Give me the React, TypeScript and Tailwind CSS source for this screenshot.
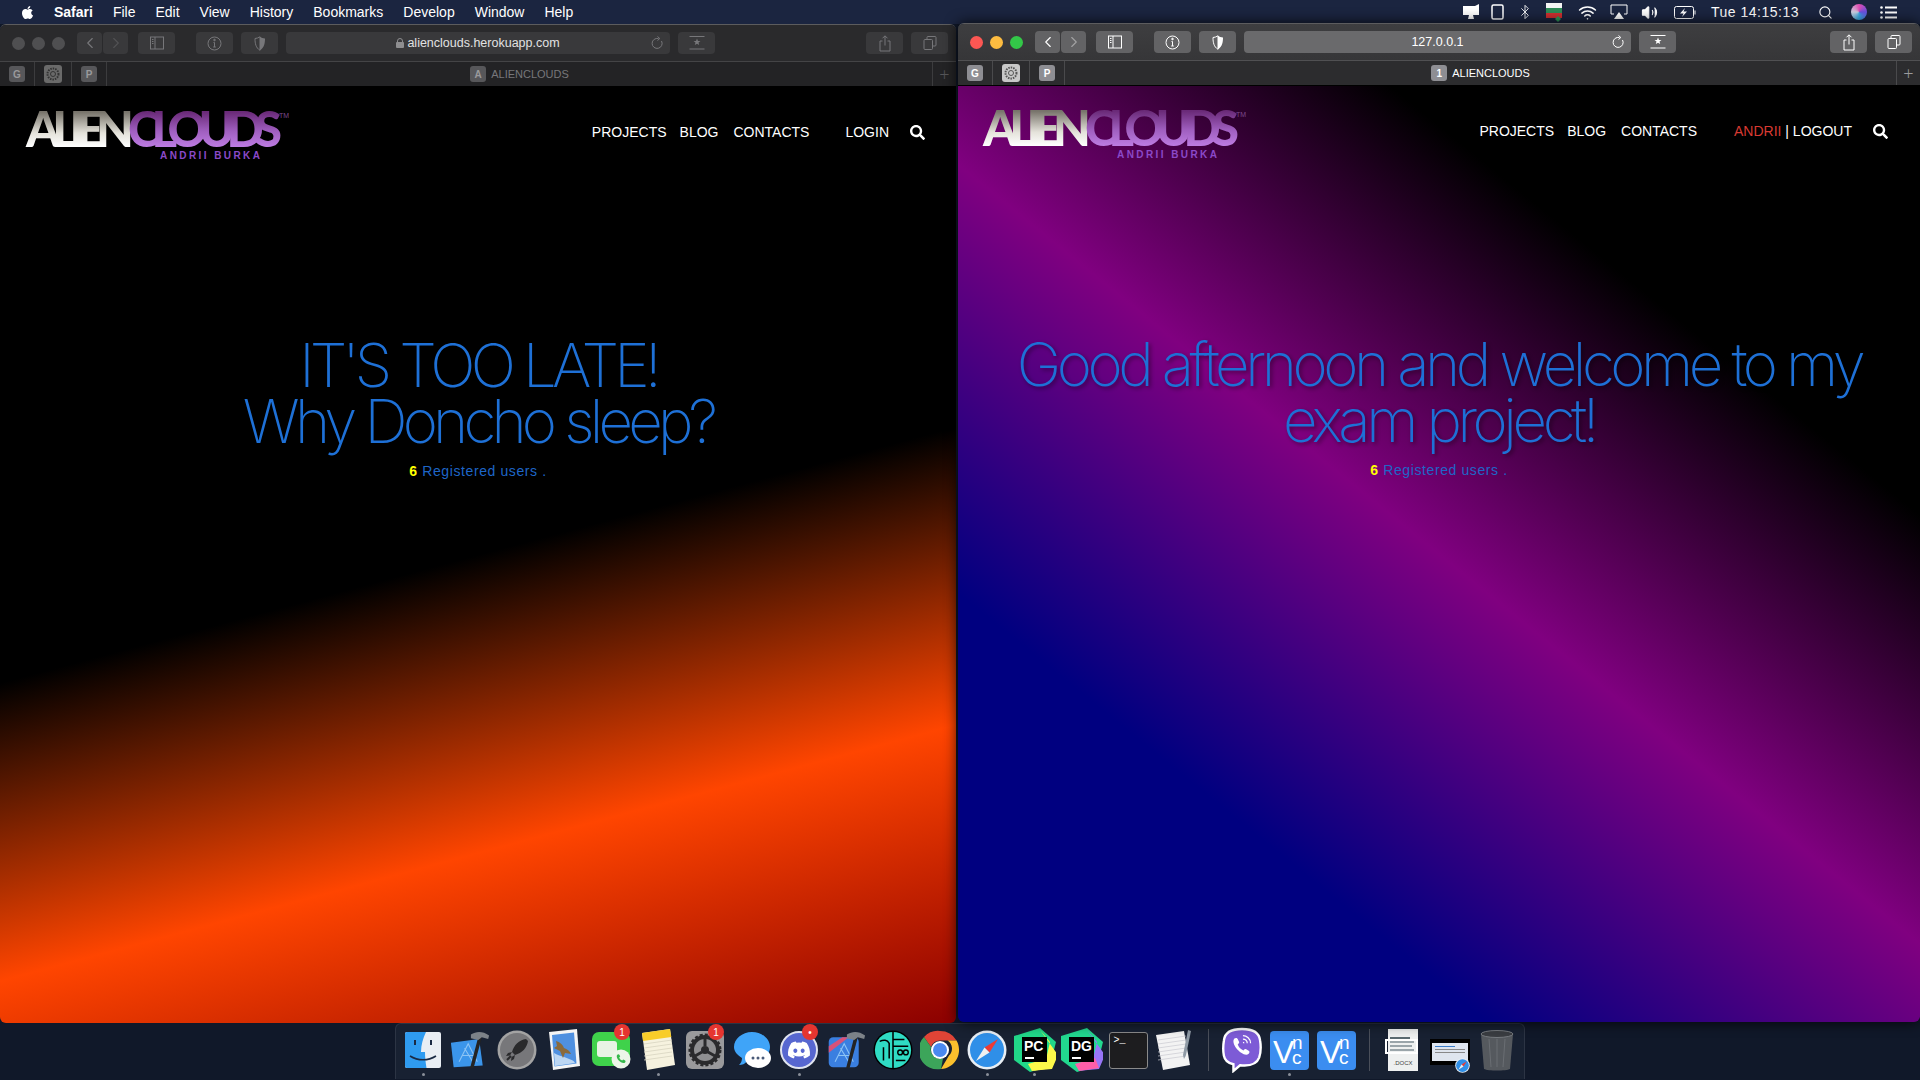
import type { ReactNode } from "react";
import { Bluetooth, ChevronLeft, ChevronRight, Search, Volume2, Wifi } from "lucide-react";
import { FaApple, FaDiscord, FaSearch } from "react-icons/fa";

const sans = "font-['Liberation_Sans',Arial,sans-serif]";

function Logo({ id }: { id: string }) {
  return (
    <svg width="265" height="54" viewBox="0 0 265 54" className="shrink-0 overflow-visible">
      <defs>
        <linearGradient id={`${id}-a`} gradientUnits="userSpaceOnUse" x1="0" y1="7" x2="0" y2="42">
          <stop offset="0" stopColor="#77736a" />
          <stop offset="0.6" stopColor="#e4e2da" />
          <stop offset="1" stopColor="#ffffff" />
        </linearGradient>
        <linearGradient id={`${id}-b`} gradientUnits="userSpaceOnUse" x1="0" y1="7" x2="0" y2="42">
          <stop offset="0" stopColor="#6a2a78" />
          <stop offset="0.55" stopColor="#a05fc0" />
          <stop offset="1" stopColor="#bd7ce2" />
        </linearGradient>
      </defs>
      <g fontFamily="Lato, sans-serif" fontWeight="900" fontSize="49">
        <text x="0" y="42" textLength="108" lengthAdjust="spacing" fill={`url(#${id}-a)`}>ALIEN</text>
        <text x="102" y="42" textLength="154" lengthAdjust="spacing" fill={`url(#${id}-b)`}>CLOUDS</text>
      </g>
      <text x="253" y="13" fontFamily="Liberation Sans" fontSize="7" fill="#7b4a8c">TM</text>
      <text x="134" y="54" textLength="100" fontFamily="Liberation Sans" fontWeight="700" fontSize="10" fill="#8b49c9">ANDRII BURKA</text>
    </svg>
  );
}

function Nav({ className = "", children }: { className?: string; children: ReactNode }) {
  return <span className={`${sans} block text-[14px] leading-[16px] text-white whitespace-nowrap ${className}`}>{children}</span>;
}

function TrafficLights({ active }: { active: boolean }) {
  const colors = active ? ["bg-[#fc5753]", "bg-[#fdbc40]", "bg-[#33c748]"] : ["bg-[#4f4f51]", "bg-[#4f4f51]", "bg-[#4f4f51]"];
  return (
    <div className="flex gap-[7px]">
      {colors.map((c, i) => (
        <span key={i} className={`w-[13px] h-[13px] rounded-full ${c}`} />
      ))}
    </div>
  );
}

function ToolButton({ active, w = "w-[37px]", className = "", children }: { active: boolean; w?: string; className?: string; children?: ReactNode }) {
  return (
    <div className={`h-[22px] ${w} rounded-[4px] flex items-center justify-center shrink-0 ${active ? "bg-[#636365] text-white" : "bg-[#39393b] text-[#77777a]"} ${className}`}>
      {children}
    </div>
  );
}

function Toolbar({ active, url }: { active: boolean; url: string }) {
  return (
    <div className={`h-[37px] flex items-center pl-[12px] pr-[8px] border-b ${active ? "bg-[linear-gradient(180deg,#3e3e40,#363638)] border-[#505052]" : "bg-[#2a2a2c] border-[#444446]"}`}>
      <TrafficLights active={active} />
      <div className="flex gap-[1px] ml-[12px]">
        <ToolButton active={active} w="w-[25px]"><ChevronLeft size={18} strokeWidth={1.5} /></ToolButton>
        <ToolButton active={active} w="w-[25px]"><ChevronRight size={18} strokeWidth={1.5} className="opacity-40" /></ToolButton>
      </div>
      <ToolButton active={active} className="ml-[10px]">
        <svg width="16" height="14" viewBox="0 0 16 14" fill="none" stroke="currentColor"><rect x="1.5" y="1" width="13" height="12" /><path d="M6 1v12M3 3.5h1.5M3 5.5h1.5M3 7.5h1.5" /></svg>
      </ToolButton>
      <ToolButton active={active} className="ml-[21px]">
        <svg width="15" height="15" viewBox="0 0 15 15" fill="none" stroke="currentColor"><circle cx="7.5" cy="7.5" r="6.5" /><path d="M7.5 6.5v4.5M6.2 11h2.6M6.5 6.5h1" /><circle cx="7.5" cy="4" r=".8" fill="currentColor" /></svg>
      </ToolButton>
      <ToolButton active={active} className="ml-[8px]">
        <svg width="12" height="15" viewBox="0 0 12 15"><path d="M6 .8C4.5 1.8 2.8 2.4 1 2.5c0 5 .8 9.300 5 11.800V.8z" fill="none" stroke="currentColor" /><path d="M6 .8c1.500 1 3.200 1.600 5 1.700 0 5-.8 9.300-5 11.800V.8z" fill="currentColor" /></svg>
      </ToolButton>
      <div className={`ml-[8px] h-[22px] ${active ? "w-[387px] bg-[#6a6a6c]" : "w-[384px] bg-[#39393b]"} rounded-[4px] relative flex items-center justify-center shrink-0`}>
        <span className={`${sans} text-[12.5px] flex items-center gap-[3px] ${active ? "text-white" : "text-[#e2e2e2]"}`}>
          {!active && (
            <svg width="8" height="10" viewBox="0 0 8 10" fill="#8e8e90"><rect y="4" width="8" height="6" rx="1" /><path d="M1.500 4.500V3a2.500 2.500 0 0 1 5 0v1.500" fill="none" stroke="#8e8e90" /></svg>
          )}
          {url}
        </span>
        <svg width="13" height="14" viewBox="0 0 13 14" fill="none" stroke={active ? "#fff" : "#77777a"} className="absolute right-[6px]"><path d="M10.500 5a5 5 0 1 1-3-2.400" /><path d="M6.500 .5l2.300 2-2.300 2" /></svg>
      </div>
      <ToolButton active={active} className="ml-[8px]">
        <svg width="16" height="14" viewBox="0 0 16 14" fill="currentColor"><path d="M8 2.500l1 2.500 2.500.1-2 1.500.7 2.500L8 7.700 5.800 9.100l.7-2.500-2-1.500L7 5z" /><path d="M.5.500h15M.5 13h15" stroke="currentColor" /></svg>
      </ToolButton>
      <div className="flex-1" />
      <ToolButton active={active}>
        <svg width="12" height="17" viewBox="0 0 12 17" fill="none" stroke="currentColor"><path d="M3.500 6H1v10h10V6H8.500M6 10.500V1M3.500 3.300L6 .8l2.500 2.500" /></svg>
      </ToolButton>
      <ToolButton active={active} className="ml-[8px]">
        <svg width="14" height="14" viewBox="0 0 14 14" fill="none" stroke="currentColor"><rect x="1" y="3.500" width="8.500" height="10" rx="1" /><path d="M4 3.500V1.500a1 1 0 0 1 1-1h7a1 1 0 0 1 1 1v7.500a1 1 0 0 1-1 1H9.500" /></svg>
      </ToolButton>
    </div>
  );
}

function Fav({ active, children, className = "" }: { active: boolean; children: ReactNode; className?: string }) {
  return (
    <span className={`${sans} w-[16px] h-[16px] rounded-[3px] flex items-center justify-center text-[10px] font-bold ${active ? "bg-[#8e8e93] text-white" : "bg-[#57575a] text-[#9a9a9c]"} ${className}`}>
      {children}
    </span>
  );
}

function GearFav({ active }: { active: boolean }) {
  return (
    <span className={`w-[18px] h-[18px] rounded-[3px] flex items-center justify-center ${active ? "bg-[#c8c8c8]" : "bg-[#6a6a6a]"}`}>
      <svg width="14" height="14" viewBox="0 0 14 14" fill="none" stroke={active ? "#555" : "#333"}><circle cx="7" cy="7" r="5.500" strokeWidth="2" strokeDasharray="1.500 1" /><circle cx="7" cy="7" r="2.500" /></svg>
    </span>
  );
}

function TabBar({ active, letter }: { active: boolean; letter: string }) {
  const border = active ? "border-[#4a4a4c]" : "border-[#3c3c3e]";
  return (
    <div className={`h-[25px] flex items-stretch border-b border-black ${active ? "bg-[#2c2c2e]" : "bg-[#232325]"}`}>
      <div className={`w-[35px] flex items-center justify-center border-r ${border}`}><Fav active={active}>G</Fav></div>
      <div className={`w-[37px] flex items-center justify-center border-r ${border}`}><GearFav active={active} /></div>
      <div className={`w-[35px] flex items-center justify-center border-r ${border}`}><Fav active={active}>P</Fav></div>
      <div className="flex-1 flex items-center justify-center gap-[5px]">
        <Fav active={active}>{letter}</Fav>
        <span className={`${sans} text-[11px] ${active ? "text-white" : "text-[#77777a]"}`}>ALIENCLOUDS</span>
      </div>
      <div className={`w-[24px] flex items-center justify-center border-l text-[18px] font-light ${border} ${active ? "text-[#9a9a9c]" : "text-[#555558]"}`}>+</div>
    </div>
  );
}

function Hero({ lines, className = "", tracking }: { lines: ReactNode; className?: string; tracking: string }) {
  return (
    <div className={`flex flex-col items-center ${className}`}>
      <h1 className={`font-['Inter',sans-serif] font-[150] text-[60px] leading-[56px] ${tracking} text-center text-[#1e70d6] [text-shadow:2px_2px_4px_rgba(0,0,0,0.45)]`}>
        {lines}
      </h1>
      <p className={`${sans} mt-[12px] text-[14px] leading-[20px] tracking-[0.6px] text-[#1e66c8]`}>
        <b className="text-[#ffff00]">6</b> Registered users .
      </p>
    </div>
  );
}

function LeftWindow() {
  return (
    <div className="w-[956px] h-full rounded-[6px] overflow-hidden flex flex-col shrink-0 border-t border-[#5c5c5e]">
      <Toolbar active={false} url="alienclouds.herokuapp.com" />
      <TabBar active={false} letter="A" />
      <div className="flex-1 flex flex-col bg-[linear-gradient(165deg,#000_50%,#ff4500_75%,#8b0000_100%)]">
        <div className="h-[90px] flex items-center pl-[26px] pr-[31px]">
          <Logo id="left" />
          <div className="flex-1" />
          <Nav>PROJECTS</Nav>
          <Nav className="ml-[13px]">BLOG</Nav>
          <Nav className="ml-[15px]">CONTACTS</Nav>
          <Nav className="ml-[36px]">LOGIN</Nav>
          <FaSearch className="ml-[21px] text-white" size={15} />
        </div>
        <Hero className="pt-[160px]" tracking="tracking-[-4.800px]" lines={<>IT'S TOO LATE!<br />Why Doncho sleep?</>} />
      </div>
    </div>
  );
}

function RightWindow() {
  return (
    <div className="relative z-10 flex-1 h-full rounded-[6px] overflow-hidden flex flex-col shadow-[0_0_14px_rgba(0,0,0,0.85)] border-t border-[#5c5c5e] -mt-[1px]">
      <Toolbar active url="127.0.0.1" />
      <TabBar active letter="1" />
      <div className="flex-1 flex flex-col bg-[linear-gradient(219deg,#000_25%,#800080_50%,#000080_75%)]">
        <div className="h-[90px] flex items-center pl-[25px] pr-[32px]">
          <Logo id="right" />
          <div className="flex-1" />
          <Nav>PROJECTS</Nav>
          <Nav className="ml-[13px]">BLOG</Nav>
          <Nav className="ml-[15px]">CONTACTS</Nav>
          <Nav className="ml-[37px]"><span className="text-[#d83a32]">ANDRII</span> | LOGOUT</Nav>
          <FaSearch className="ml-[21px] text-white" size={15} />
        </div>
        <Hero className="pt-[160px] px-[40px]" tracking="tracking-[-4.400px]" lines="Good afternoon and welcome to my exam project!" />
      </div>
    </div>
  );
}

function MenuBar() {
  const items = ["File", "Edit", "View", "History", "Bookmarks", "Develop", "Window", "Help"];
  return (
    <div className={`${sans} h-[24px] shrink-0 bg-[#1b2540] flex items-center text-[14px] text-white pl-[20px] pr-[23px]`}>
      <FaApple size={15} className="mr-[19px]" />
      <b className="mr-[20px]">Safari</b>
      <div className="flex gap-[20px]">
        {items.map((m) => (
          <span key={m}>{m}</span>
        ))}
      </div>
      <div className="flex-1" />
      <div className="flex items-center gap-[13px]">
        <svg width="18" height="16" viewBox="0 0 18 16" fill="#fff" className="-mr-[2px]"><path d="M1 2h12l4-2v11H1z" /><path d="M7 11h4l1 4H6z" /></svg>
        <svg width="13" height="16" viewBox="0 0 13 16" fill="none" stroke="#fff" strokeWidth="1.500"><rect x="1" y="1" width="11" height="14" rx="1.500" /></svg>
        <Bluetooth size={16} strokeWidth={1.300} />
        <svg width="16" height="20" viewBox="0 0 16 20" className="mr-[3px]"><rect width="16" height="5" y="1" fill="#f4f4f4" /><rect width="16" height="5" y="6" fill="#2e8b57" /><rect width="16" height="5" y="11" fill="#d03030" /><path d="M12 14l3 3-3 3-3-3z" fill="#2e9c5a" /></svg>
        <Wifi size={19} strokeWidth={2} />
        <svg width="18" height="16" viewBox="0 0 18 16" fill="none" stroke="#fff"><path d="M4 10H1V1h16v9h-3" /><path d="M9 8l5 7H4z" fill="#fff" stroke="none" /></svg>
        <Volume2 size={17} fill="#fff" strokeWidth={1.500} className="mr-[3px]" />
        <svg width="22" height="13" viewBox="0 0 22 13" fill="none" stroke="#fff"><rect x=".5" y=".5" width="19" height="12" rx="2" /><path d="M21 4.500v4" /><path d="M11 2L6 7.500h3.500L8 11l5-5.500H9.500z" fill="#fff" stroke="none" /></svg>
        <span className="mx-[2px] tracking-[0.5px] whitespace-nowrap">Tue 14:15:13</span>
        <Search size={15} strokeWidth={1.800} className="ml-[4px] mr-[5px]" />
        <span className="w-[16px] h-[16px] rounded-full bg-[conic-gradient(#e04bb0,#6a50e0,#38b0e8,#d0d0e0,#e04bb0)]" />
        <svg width="17" height="13" viewBox="0 0 17 13" fill="#fff"><circle cx="1.500" cy="1.500" r="1.300" /><circle cx="1.500" cy="6.500" r="1.300" /><circle cx="1.500" cy="11.500" r="1.300" /><rect x="5" y=".5" width="12" height="2" /><rect x="5" y="5.500" width="12" height="2" /><rect x="5" y="10.500" width="12" height="2" /></svg>
      </div>
    </div>
  );
}

function Badge({ children }: { children: ReactNode }) {
  return (
    <span className={`${sans} absolute -top-[5px] right-[1px] w-[16px] h-[16px] rounded-full bg-[#e53530] text-white text-[10px] flex items-center justify-center`}>
      {children}
    </span>
  );
}

function DockItem({ dot, badge, children }: { dot?: boolean; badge?: string; children: ReactNode }) {
  return (
    <div className="w-[40px] flex flex-col items-center shrink-0">
      <div className="relative w-[40px] h-[42px] flex items-center justify-center">
        {children}
        {badge && <Badge>{badge}</Badge>}
      </div>
      <span className={`mt-[2px] w-[3px] h-[3px] rounded-full ${dot ? "bg-[#8a8f99]" : "bg-transparent"}`} />
    </div>
  );
}

function Finder() {
  return (
    <svg width="38" height="38" viewBox="0 0 38 38">
      <rect x="1" y="1" width="36" height="36" rx="2" fill="#e9eef4" />
      <path d="M3 1h19c-3 6-5 13-5 20h4c0 5 .5 10 1.500 16H3a2 2 0 0 1-2-2V3a2 2 0 0 1 2-2z" fill="#2f9bf0" />
      <path d="M11 9v5M27 9v5" stroke="#1a2a44" strokeWidth="2" />
      <path d="M6 25c8 5 18 5 26 0" stroke="#1a2a44" strokeWidth="1.600" fill="none" />
    </svg>
  );
}

function XcodeIcon({ beta }: { beta?: boolean }) {
  return (
    <svg width="44" height="44" viewBox="0 0 44 44">
      {beta ? <rect x="3" y="8" width="33" height="33" rx="5" fill="#3a7fe0" /> : <path d="M1 14l31-4 4 29-32 2z" fill="#3b95ea" />}
      <path d="M10 35L20 15l10 20M13 28h14M16 20l9 15" stroke="#8cc4f5" strokeWidth="1.200" fill="none" />
      {beta && <path d="M3 18L18 8h7L3 25z" fill="#d8527a" />}
      <path d="M33 8l-9 34" stroke="#242424" strokeWidth="3.800" />
      <path d="M23 5c6-4 13-4 20 1l-1 4-7-2-4 3-8-2z" fill="#7c8288" />
    </svg>
  );
}

function Launchpad() {
  return (
    <svg width="40" height="40" viewBox="0 0 40 40">
      <circle cx="20" cy="20" r="19.500" fill="#a3a3a3" />
      <circle cx="20" cy="20" r="17" fill="#77777a" />
      <path d="M29 9c-7 1-12 6-14 13l3 3c7-2 12-7 13-14zM15 22l-4 1-2 3 4-.5zM18 25l-1 4-3 2 .5-4z" fill="#2a2a2c" />
      <path d="M10 30l4-4" stroke="#2a2a2c" strokeWidth="2" />
    </svg>
  );
}

function MailIcon() {
  return (
    <svg width="36" height="42" viewBox="0 0 36 42">
      <path d="M3 3l28-3 3 37-27 4z" fill="#f4f4f4" />
      <path d="M6 6l22-2.500 2.500 31-22 3z" fill="#4f90e0" />
      <path d="M8 24c7 4 20 6 21 10l-20 3z" fill="#bcd6f2" />
      <path d="M10 12c4 1 7 4 8 7 3 1 6 3 7 6l-6-1-2 5-3-7-6-3 3-2z" fill="#8a6a3c" />
    </svg>
  );
}

function FaceTime() {
  return (
    <div className="relative w-[38px] h-[38px]">
      <div className="absolute inset-x-0 top-[1px] h-[34px] rounded-[7px] bg-[#3fd24b] flex items-center pl-[5px]">
        <span className="w-[20px] h-[16px] rounded-[3px] bg-[#e8f3e4]" />
      </div>
      <svg width="20" height="20" viewBox="0 0 20 20" className="absolute -right-[1px] bottom-[0px]">
        <circle cx="10" cy="10" r="9.500" fill="#ecf5e8" />
        <path d="M6 6c1-1 2-1 2.500 0l.7 1.500-1 1c.5 1.500 1.500 2.500 3 3l1-1 1.600.7c1 .5 1 1.500 0 2.500-3 1.500-9.500-4-7.800-7.700z" fill="#34b84a" />
      </svg>
    </div>
  );
}

function Notes() {
  return (
    <svg width="36" height="44" viewBox="0 0 36 44">
      <path d="M2 5l28-4 5 36-28 5z" fill="#f6f2df" />
      <path d="M2 5l28-4 1.300 8L3 13z" fill="#f8cd2a" />
      {[16, 20, 24, 28, 32].map((y) => (
        <path key={y} d={`M4 ${y}l28-4`} stroke="#d8d4c0" strokeWidth=".8" />
      ))}
    </svg>
  );
}

function Prefs() {
  return (
    <svg width="38" height="38" viewBox="0 0 38 38">
      <rect width="38" height="38" rx="6" fill="#9a9a9c" />
      <circle cx="19" cy="19" r="15" fill="#2a2a2c" strokeDasharray="3 2" stroke="#2a2a2c" strokeWidth="3" />
      <circle cx="19" cy="19" r="11" fill="#8f8f91" />
      <circle cx="19" cy="19" r="4" fill="#2a2a2c" />
      <path d="M19 8v7M9 25l7-4M29 25l-7-4" stroke="#2a2a2c" strokeWidth="3" />
    </svg>
  );
}

function Messages() {
  return (
    <svg width="40" height="40" viewBox="0 0 40 40">
      <path d="M20 2c10 0 18 7 18 15s-8 15-18 15c-2 0-4 0-5-1-2 3-5 4-8 4 2-2 3-4 3-7C5 25 2 21 2 17 2 9 10 2 20 2z" fill="#3fa4f8" />
      <ellipse cx="26" cy="28" rx="13" ry="10" fill="#fff" />
      <circle cx="21" cy="28" r="1.500" fill="#4a5a78" /><circle cx="26" cy="28" r="1.500" fill="#4a5a78" /><circle cx="31" cy="28" r="1.500" fill="#4a5a78" />
    </svg>
  );
}

function DiscordIcon() {
  return (
    <div className="w-[38px] h-[38px] rounded-full bg-[#5767d0] border-[2px] border-[#dfe3ef] flex items-center justify-center text-white">
      <FaDiscord size={24} />
    </div>
  );
}

function MindNode() {
  return (
    <svg width="42" height="42" viewBox="0 0 42 42">
      <circle cx="21" cy="21" r="20.500" fill="#000" />
      <circle cx="21" cy="21" r="19" fill="#2fdcc4" />
      <path d="M21 2v38M21 10h12M21 17h16M7 12c4-2 8-2 10 2v16M11 18v14" stroke="#000" strokeWidth="1.600" fill="none" />
      <rect x="26" y="21" width="5" height="5" rx="2.500" fill="none" stroke="#000" strokeWidth="1.500" />
      <rect x="32" y="21" width="5" height="5" rx="2.500" fill="none" stroke="#000" strokeWidth="1.500" />
      <path d="M24 32h10" stroke="#000" strokeWidth="1.600" />
    </svg>
  );
}

function Chrome() {
  return (
    <svg width="40" height="40" viewBox="0 0 40 40">
      <path d="M20 1a19 19 0 0 1 16.500 9.500H20a9.500 9.500 0 0 0-9 6.500L4 7A19 19 0 0 1 20 1z" fill="#e04436" />
      <path d="M36.500 10.500A19 19 0 0 1 21 39l8-13.500a9.500 9.500 0 0 0-1.500-15z" fill="#fbc02d" />
      <path d="M4 7l7 10a9.500 9.500 0 0 0 12 11.500L21 39A19 19 0 0 1 4 7z" fill="#3ca55a" />
      <circle cx="20" cy="20" r="9" fill="#fff" />
      <circle cx="20" cy="20" r="7" fill="#4a89f0" />
    </svg>
  );
}

function SafariIcon({ size = 40 }: { size?: number }) {
  return (
    <svg width={size} height={size} viewBox="0 0 40 40">
      <circle cx="20" cy="20" r="19.500" fill="#e8eef4" />
      <circle cx="20" cy="20" r="17" fill="#2f8fe8" />
      <path d="M31 9L17.500 17.500l5 5z" fill="#ee3b34" />
      <path d="M9 31l13.500-8.500-5-5z" fill="#f0f0f0" />
    </svg>
  );
}

function JetBrains({ label, a, b, c }: { label: string; a: string; b: string; c: string }) {
  return (
    <div className="relative w-[42px] h-[44px]">
      <svg width="42" height="44" viewBox="0 0 42 44" className="absolute inset-0">
        <path d="M0 8L26 0l16 14-6 24-20 6L0 32z" fill={a} />
        <path d="M26 2l10 12-6 26-14 3 22-2 6-14z" fill={b} />
        <path d="M14 36l20-6 4 10-20 3z" fill={c} />
        <rect x="8" y="9" width="25" height="25" fill="#000" />
        <rect x="11" y="29" width="9" height="2" fill="#fff" />
      </svg>
      <span className={`${sans} absolute left-[10px] top-[10px] text-[14px] leading-[16px] font-bold text-white`}>{label}</span>
    </div>
  );
}

function Terminal() {
  return (
    <div className="w-[39px] h-[37px] rounded-[3px] bg-[#1d1d1f] border border-[#8a8a8a] pl-[4px] pt-[1px] font-['Liberation_Mono',monospace] text-[10px] leading-[14px] text-white">&gt;_</div>
  );
}

function TextEdit() {
  return (
    <svg width="38" height="42" viewBox="0 0 38 42">
      <path d="M0 6l28-4 6 34-27 5z" fill="#f3f3f3" />
      {[11, 15, 19, 23, 27, 31].map((y) => (
        <path key={y} d={`M2 ${y}l28-4`} stroke="#c8c8d0" strokeWidth=".7" />
      ))}
      <path d="M32 1l3 1-5 24-2 4-1-4z" fill="#8f9aa5" />
    </svg>
  );
}

function Viber() {
  return (
    <svg width="42" height="46" viewBox="0 0 42 46">
      <path d="M21 1C10 1 3 4 2 13c-1 6-1 11 0 16 1 5 5 8 10 9v7l7-6c9 1 17 0 20-8 2-6 2-12 1-18C39 4 32 1 21 1z" fill="#7d5bd6" stroke="#fff" strokeWidth="2.500" />
      <path d="M13 11c1-1 3-1 3.500.5l1.500 3c.3 1-.8 2-1.500 2.500.8 3 3 5 6 6.500.5-.8 1.500-2 2.500-1.500l3 1.800c1.200.7 1 2.200 0 3.200-5 5-20-10-15-16z" fill="#fff" />
      <path d="M22 8c4 0 8 3 8 8M22 11.500c2.500 0 4.500 2 4.500 4.500M22 15c.7 0 1 .4 1 1" stroke="#fff" strokeWidth="1.300" fill="none" />
    </svg>
  );
}

function Vnc() {
  return (
    <svg width="39" height="39" viewBox="0 0 39 39">
      <rect width="39" height="39" rx="4" fill="#3b8df0" />
      <text x="3" y="32" fontFamily="Liberation Sans" fontSize="32" fill="#fff">V</text>
      <text x="22" y="18" fontFamily="Liberation Sans" fontSize="19" fill="#fff">n</text>
      <text x="22" y="33" fontFamily="Liberation Sans" fontSize="19" fill="#fff">c</text>
    </svg>
  );
}

function Docx() {
  return (
    <div className="relative w-[30px] h-[42px] bg-[#eef0f0] flex flex-col justify-end items-center">
      <div className="absolute left-[2px] top-[8px] w-[24px] h-[20px] flex flex-col gap-[2px]">
        <span className="h-[2px] bg-[#5a6a70] w-[20px]" />
        <span className="h-[2px] bg-[#9aa5aa]" />
        <span className="h-[2px] bg-[#9aa5aa] w-[22px]" />
        <span className="h-[2px] bg-[#9aa5aa]" />
      </div>
      <span className="absolute -left-[3px] top-[10px] w-[33px] h-[15px] border-2 border-white" />
      <span className={`${sans} text-[6px] text-[#444] mb-[3px]`}>.DOCX</span>
    </div>
  );
}

function WebThumb() {
  return (
    <div className="relative w-[42px] h-[26px] mt-[4px] bg-black flex items-center justify-center">
      <div className="w-[36px] h-[18px] bg-[#dfe5ee] flex flex-col gap-[2px] p-[3px]">
        <span className="h-[1px] w-[20px] bg-[#3b7dc8]" />
        <span className="h-[1px] bg-[#888]" />
        <span className="h-[1px] bg-[#888]" />
      </div>
      <span className="absolute -right-[0px] -bottom-[8px]"><SafariIcon size={15} /></span>
    </div>
  );
}

function Trash() {
  return (
    <svg width="34" height="42" viewBox="0 0 34 42">
      <path d="M1 5h32l-3 35c-4 2-22 2-26 0z" fill="#55595e" />
      <ellipse cx="17" cy="5" rx="16" ry="3.500" fill="#3a3d42" stroke="#777b80" />
      <path d="M9 10l2 28M17 10v28M25 10l-2 28" stroke="#6a6e73" />
    </svg>
  );
}

function DockSep() {
  return <span className="w-[1px] h-[42px] bg-[#4a4f5a] mx-[6px] shrink-0" />;
}

function Dock() {
  return (
    <div className="flex justify-center shrink-0">
      <div className="w-[1130px] h-[56px] flex justify-center gap-[7px] pt-[5px] rounded-t-[6px] bg-[#182132] border border-b-0 border-[#2c3444]">
        <DockItem dot><Finder /></DockItem>
        <DockItem><XcodeIcon /></DockItem>
        <DockItem><Launchpad /></DockItem>
        <DockItem><MailIcon /></DockItem>
        <DockItem badge="1"><FaceTime /></DockItem>
        <DockItem dot><Notes /></DockItem>
        <DockItem badge="1"><Prefs /></DockItem>
        <DockItem><Messages /></DockItem>
        <DockItem dot badge="•"><DiscordIcon /></DockItem>
        <DockItem><XcodeIcon beta /></DockItem>
        <DockItem><MindNode /></DockItem>
        <DockItem><Chrome /></DockItem>
        <DockItem dot><SafariIcon /></DockItem>
        <DockItem dot><JetBrains label="PC" a="#21d789" b="#fcf84a" c="#fcf84a" /></DockItem>
        <DockItem><JetBrains label="DG" a="#22d88f" b="#9775f8" c="#ff5ea8" /></DockItem>
        <DockItem><Terminal /></DockItem>
        <DockItem><TextEdit /></DockItem>
        <DockSep />
        <DockItem><Viber /></DockItem>
        <DockItem dot><Vnc /></DockItem>
        <DockItem><Vnc /></DockItem>
        <DockSep />
        <DockItem><Docx /></DockItem>
        <DockItem><WebThumb /></DockItem>
        <DockItem><Trash /></DockItem>
      </div>
    </div>
  );
}

export default function App() {
  return (
    <div className="w-screen h-screen overflow-hidden flex flex-col bg-[#101829]">
      <MenuBar />
      <div className="h-[999px] shrink-0 flex gap-[2px]">
        <LeftWindow />
        <RightWindow />
      </div>
      <Dock />
    </div>
  );
}
